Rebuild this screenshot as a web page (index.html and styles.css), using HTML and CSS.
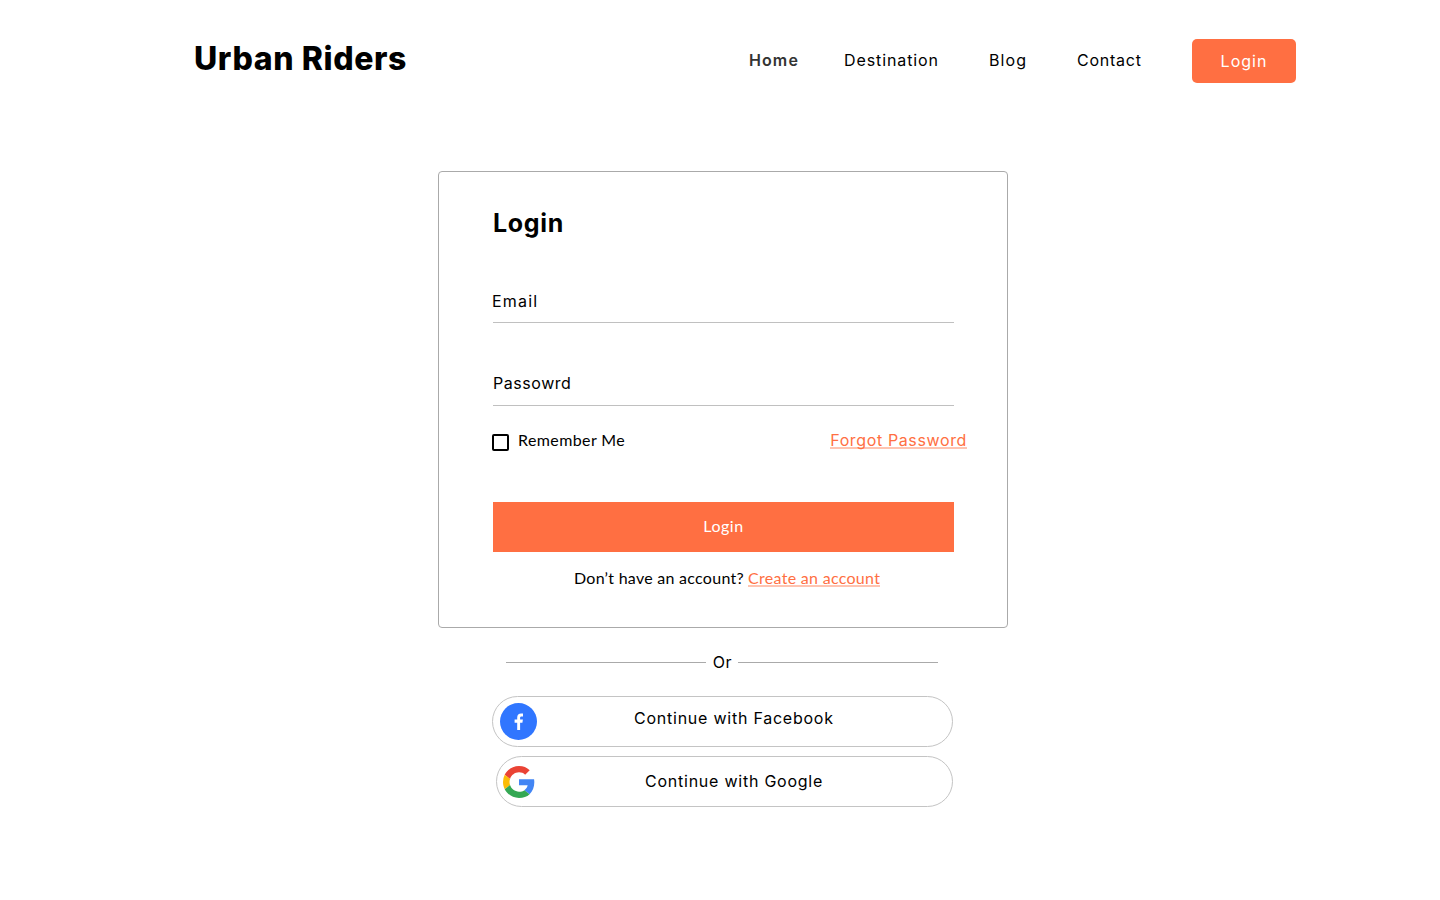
FILE: index.html
```html
<!DOCTYPE html>
<html lang="en">
<head>
<meta charset="utf-8">
<title>Urban Riders</title>
<link rel="stylesheet" href="styles.css">
</head>
<body>
<header class="header">
  <a class="brand">Urban Riders</a>
  <nav class="nav">
    <a class="home">Home</a>
    <a class="destination">Destination</a>
    <a class="blog">Blog</a>
    <a class="contact">Contact</a>
  </nav>
  <button class="nav-login">Login</button>
</header>
<main class="main">
  <form class="card">
    <h1 class="title">Login</h1>
    <label class="field email"><span class="email-text">Email</span></label>
    <label class="field password"><span class="password-text">Passowrd</span></label>
    <div class="options">
      <span class="checkbox"></span>
      <span class="remember">Remember Me</span>
      <a class="forgot">Forgot Password</a>
    </div>
    <button type="button" class="submit">Login</button>
    <p class="signup"><span class="question">Don’t have an account?</span><a class="create">Create an account</a></p>
  </form>
  <div class="divider"><span class="rule"></span><span class="or">Or</span><span class="rule"></span></div>
  <div class="social">
    <a class="provider facebook">
      <svg class="fb-icon" viewBox="0 0 37 37"><circle cx="18.500" cy="18.500" r="18.500" fill="#3076ff"/><path d="M17.200 27v-7.200h-2.600v-3.200h2.600v-2c0-2.500 1.500-4 3.900-4h1.900v2.900h-1.400c-1.100 0-1.500.5-1.500 1.500v1.600h2.800l-.5 3.200h-2.300V27z" fill="#fff"/></svg>
      <span class="facebook-text">Continue with Facebook</span>
    </a>
    <a class="provider google">
      <svg class="google-icon" viewBox="0 0 48 48"><path fill="#ea4335" d="M24 9.500c3.540 0 6.710 1.220 9.210 3.600l6.850-6.850C35.900 2.380 30.470 0 24 0 14.620 0 6.510 5.380 2.560 13.220l7.980 6.190C12.430 13.720 17.740 9.500 24 9.500z"/><path fill="#4285f4" d="M46.980 24.550c0-1.570-.15-3.090-.38-4.550H24v9.020h12.940c-.58 2.960-2.260 5.480-4.780 7.180l7.730 6c4.510-4.180 7.090-10.360 7.090-17.650z"/><path fill="#fbbc05" d="M10.530 28.590A14.500 14.500 0 0 1 9.770 24c0-1.600.27-3.140.76-4.590l-7.980-6.190A24 24 0 0 0 0 24c0 3.880.92 7.540 2.560 10.780z"/><path fill="#34a853" d="M24 48c6.480 0 11.930-2.130 15.890-5.810l-7.730-6c-2.150 1.450-4.920 2.300-8.160 2.300-6.260 0-11.570-4.220-13.470-9.910l-7.980 6.190C6.510 42.620 14.620 48 24 48z"/></svg>
      <span class="google-text">Continue with Google</span>
    </a>
  </div>
</main>
</body>
</html>
```
FILE: styles.css
```css
* { box-sizing: border-box; }
body { margin: 0; height: 900px; overflow: hidden; background: #fff; color: #000; font: 400 16px/20px Inter, "Open Sans", sans-serif; white-space: nowrap; }
button { border: 0; padding: 0; font: inherit; color: #fff; background: #ff6f42; }
.header { display: flex; align-items: flex-start; height: 171px; padding: 39px 144px 0 194px; }
.brand { width: 555px; font-size: 32px; font-weight: 800; line-height: 40px; letter-spacing: .6px; }
.nav { display: grid; grid-template-columns: 95px 145px 88px 115px; padding-top: 11px; }
.home { color: #333; font-weight: 600; letter-spacing: 1.1px; }
.destination { letter-spacing: .9px; }
.blog { letter-spacing: 1.1px; }
.contact { letter-spacing: .75px; }
.nav-login { width: 104px; height: 44px; border-radius: 5px; letter-spacing: 1px; padding-bottom: 1px; }
.main { width: 570px; margin-left: 438px; }
.card { height: 457px; padding: 36px 40px 0 54px; border: 1px solid #aaa; border-radius: 4px; }
.title { margin: 0; font-size: 25px; font-weight: 700; line-height: 30px; letter-spacing: .7px; }
.field { display: block; width: 461px; border-bottom: 1px solid #c0c0c0; }
.email { height: 32px; margin-top: 53px; }
.email-text { margin-left: -1px; letter-spacing: 1.2px; }
.password { height: 33px; margin-top: 50px; }
.password-text { letter-spacing: .55px; }
.options { display: flex; width: 475px; margin: 24px 0 0 -1px; height: 20px; }
.checkbox { width: 17px; height: 17px; margin: 4px 9px 0 0; border: 2px solid #000; border-radius: 2px; }
.remember { font-family: Lato, sans-serif; letter-spacing: .4px; }
.forgot, .create { color: #ff6f42; border-bottom: 2px solid #ffc4b1; }
.forgot { height: 19px; margin-left: auto; letter-spacing: .63px; }
.submit { display: block; width: 461px; height: 50px; margin-top: 52px; padding-bottom: 2px; font-family: Lato, sans-serif; letter-spacing: .5px; }
.signup { display: flex; margin: 16px 0 0 81px; font-family: Lato, sans-serif; }
.question { width: 174px; letter-spacing: .27px; }
.create { height: 19px; letter-spacing: .3px; }
.divider { display: grid; grid-template-columns: 200px 32px 200px; align-items: center; margin: 24px 0 0 68px; height: 20px; }
.rule { height: 1px; background: #aaa; }
.or { padding-left: 1px; text-align: center; letter-spacing: .5px; }
.social { display: grid; gap: 9px; justify-items: end; width: 515px; margin-top: 24px; }
.provider { display: flex; height: 51px; border: 1px solid #c4c4c4; border-radius: 26px; }
.facebook { width: 461px; padding: 6px 0 0 7px; }
.google { width: 457px; padding: 9px 0 0 6px; }
.fb-icon { width: 37px; height: 37px; }
.google-icon { width: 32px; height: 32px; }
.facebook-text { margin: 5px 0 0 97px; letter-spacing: .76px; }
.google-text { margin: 5px 0 0 110px; letter-spacing: .76px; }
```
